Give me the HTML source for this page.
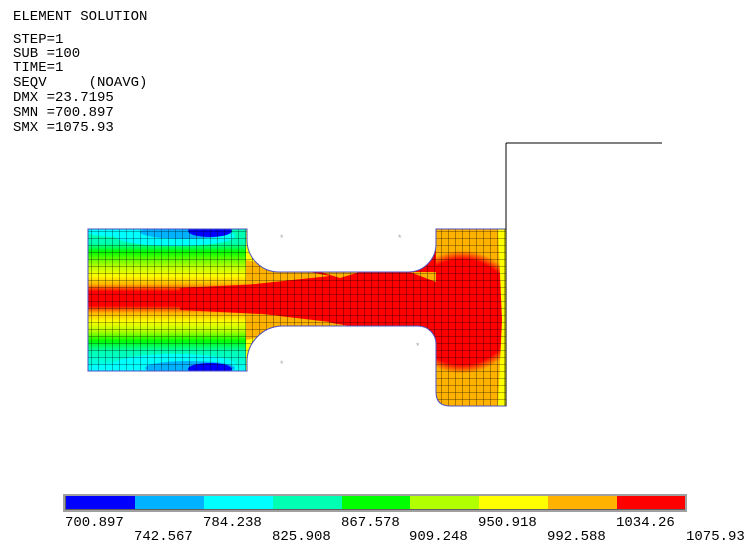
<!DOCTYPE html>
<html><head><meta charset="utf-8"><style>
html,body{margin:0;padding:0;background:#fff;width:750px;height:551px;overflow:hidden}
svg{display:block}
text{font-family:"Liberation Mono",monospace;font-size:14px;fill:#000;white-space:pre}
</style></head><body>
<svg width="750" height="551" viewBox="0 0 750 551" xmlns="http://www.w3.org/2000/svg">
<defs>
<linearGradient id="lg" x1="0" y1="229" x2="0" y2="371" gradientUnits="userSpaceOnUse">
<stop offset="0" stop-color="#00ffb2"/>
<stop offset="0.1" stop-color="#00ffb2"/>
<stop offset="0.16" stop-color="#00ff00"/>
<stop offset="0.26" stop-color="#b2ff00"/>
<stop offset="0.33" stop-color="#ffff00"/>
<stop offset="0.39" stop-color="#ffb200"/>
<stop offset="0.44" stop-color="#ff0000"/>
<stop offset="0.54" stop-color="#ff0000"/>
<stop offset="0.59" stop-color="#ffb200"/>
<stop offset="0.65" stop-color="#ffff00"/>
<stop offset="0.72" stop-color="#b2ff00"/>
<stop offset="0.79" stop-color="#00ff00"/>
<stop offset="0.86" stop-color="#00ffb2"/>
<stop offset="1" stop-color="#00ffff"/>
</linearGradient>
<radialGradient id="rg" cx="462" cy="312" r="75" gradientUnits="userSpaceOnUse">
<stop offset="0.7" stop-color="#ff0000"/>
<stop offset="0.82" stop-color="#ffb200"/>
<stop offset="1" stop-color="#ffb200"/>
</radialGradient>
<pattern id="mesh" width="7" height="7" patternUnits="userSpaceOnUse">
<path d="M0 0H7M0 0V7" stroke="#000" stroke-width="0.8" fill="none"/>
</pattern>
<clipPath id="cp"><path id="shape" d="M88 229H247V240A32 32 0 0 0 279 272H408A28 28 0 0 0 436 244V229H506V406H450Q436 406 436 392V345A18 18 0 0 0 418 326H282A36 36 0 0 0 247 362V371H88Z"/></clipPath>
</defs>
<g clip-path="url(#cp)">
<rect x="88" y="229" width="160" height="142" fill="url(#lg)"/>
<ellipse cx="120" cy="229" rx="40" ry="8" fill="#00ffff"/>
<ellipse cx="120" cy="371" rx="40" ry="8" fill="#00ffff"/>
<ellipse cx="175" cy="236" rx="60" ry="10" fill="#00ffff"/>
<ellipse cx="175" cy="364" rx="60" ry="10" fill="#00ffff"/>
<ellipse cx="185" cy="232" rx="45" ry="7" fill="#00b2ff"/>
<ellipse cx="190" cy="368" rx="45" ry="7" fill="#00b2ff"/>
<ellipse cx="210" cy="231" rx="22" ry="6" fill="#0000ff"/>
<ellipse cx="210" cy="369" rx="22" ry="6" fill="#0000ff"/>
<rect x="246" y="229" width="192" height="142" fill="#ff0000"/>
<path d="M246 229L290 272H246Z M246 371L290 326H246Z" fill="#ffff00"/>
<path d="M246 260L330 276L246 285Z M246 340L330 322L246 312Z" fill="#ffb200"/>
<path d="M180 288L260 284L260 314L180 310Z" fill="#ff0000"/>
<path d="M320 272H360L340 278Z M300 326H350L320 321Z M410 272H436V282Z" fill="#ffb200"/>
<rect x="436" y="229" width="70" height="177" fill="url(#rg)"/>
<path d="M498 229H506V406H498L502 320Z" fill="#ffff00"/>
<rect x="88" y="229" width="420" height="180" fill="url(#mesh)" opacity="0.8"/>
</g>
<use href="#shape" fill="none" stroke="#5050c0" stroke-width="1"/>
<path d="M506 143H662M506 143V406" stroke="#000" stroke-width="1" fill="none"/>
<text x="279" y="241" style="font-size:9px;fill:#aaa">*</text>
<text x="397" y="241" style="font-size:9px;fill:#aaa">*</text>
<text x="279" y="367" style="font-size:9px;fill:#aaa">*</text>
<text x="415" y="349" style="font-size:9px;fill:#aaa">*</text>
<text x="13" y="20">ELEMENT SOLUTION</text>
<text x="13" y="43">STEP=1</text>
<text x="13" y="57">SUB =100</text>
<text x="13" y="71">TIME=1</text>
<text x="13" y="86">SEQV     (NOAVG)</text>
<text x="13" y="101">DMX =23.7195</text>
<text x="13" y="116">SMN =700.897</text>
<text x="13" y="131">SMX =1075.93</text>
<rect x="63" y="494" width="624" height="18" fill="#a0a0a0"/>
<rect x="65" y="496" width="620" height="14" fill="#606060"/>
<g>
<rect x="66" y="496" width="69" height="13" fill="#0000ff"/>
<rect x="135" y="496" width="69" height="13" fill="#00b2ff"/>
<rect x="204" y="496" width="69" height="13" fill="#00ffff"/>
<rect x="273" y="496" width="69" height="13" fill="#00ffb2"/>
<rect x="342" y="496" width="68" height="13" fill="#00ff00"/>
<rect x="410" y="496" width="69" height="13" fill="#b2ff00"/>
<rect x="479" y="496" width="69" height="13" fill="#ffff00"/>
<rect x="548" y="496" width="69" height="13" fill="#ffb200"/>
<rect x="617" y="496" width="68" height="13" fill="#ff0000"/>
</g>
<text x="65" y="526">700.897</text>
<text x="134" y="540">742.567</text>
<text x="203" y="526">784.238</text>
<text x="272" y="540">825.908</text>
<text x="341" y="526">867.578</text>
<text x="409" y="540">909.248</text>
<text x="478" y="526">950.918</text>
<text x="547" y="540">992.588</text>
<text x="616" y="526">1034.26</text>
<text x="686" y="540">1075.93</text>
</svg>
</body></html>
